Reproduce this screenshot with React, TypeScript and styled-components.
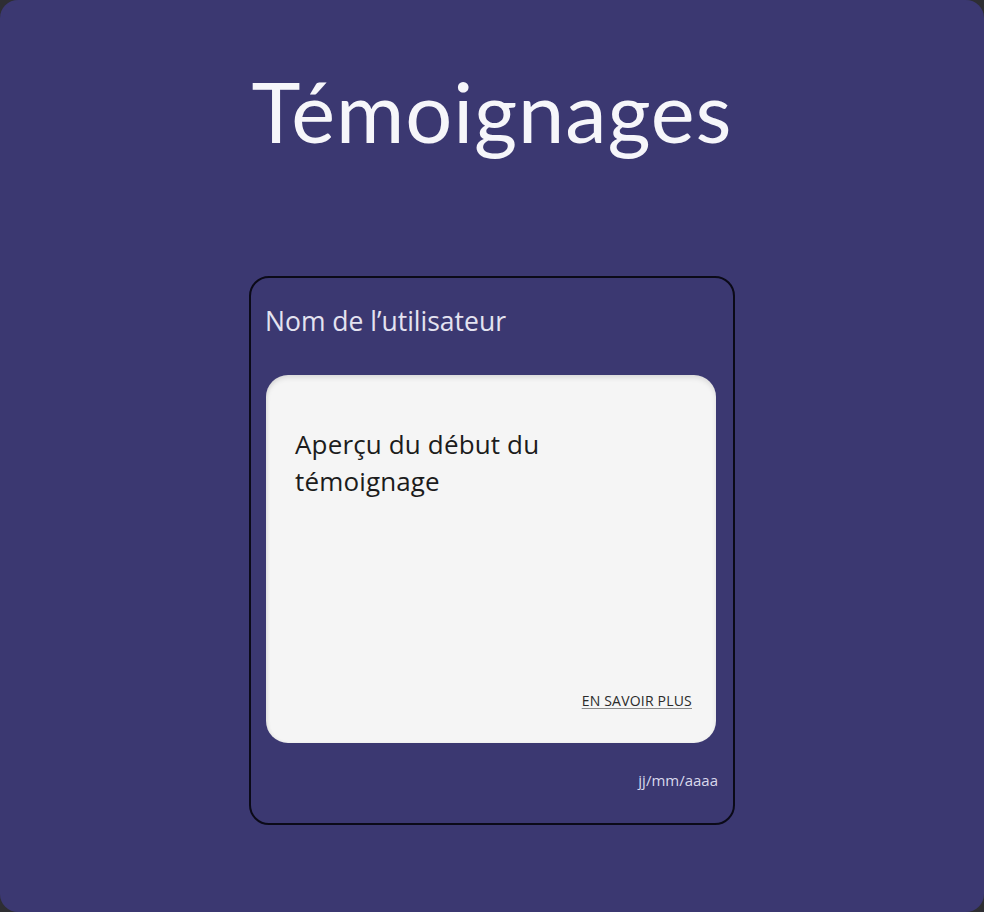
import React from "react";
import styled, { createGlobalStyle } from "styled-components";

const GlobalStyle = createGlobalStyle`
  html, body {
    margin: 0;
    padding: 0;
    background: #2e2e33;
  }
  body {
    font-family: "Open Sans", Lato, "Noto Sans", sans-serif;
  }
`;

const Page = styled.main`
  width: 984px;
  height: 912px;
  box-sizing: border-box;
  background: #3b3871;
  border-radius: 18px;
  display: flex;
  flex-direction: column;
  align-items: center;
  padding-top: 61px;
`;

const Title = styled.h1`
  margin: 0;
  font-family: Lato, "Open Sans", sans-serif;
  font-size: 83px;
  font-weight: 400;
  line-height: 100px;
  color: #f6f6fa;
  letter-spacing: 0.9px;
`;

const Testimonial = styled.article`
  margin-top: 115px;
  width: 486px;
  height: 549px;
  box-sizing: border-box;
  border: 2px solid #0b0a18;
  border-radius: 20px;
  padding: 24px 16px 0 15px;
  display: flex;
  flex-direction: column;
`;

const UserName = styled.div`
  font-size: 26.5px;
  line-height: 38px;
  color: #e4e3f0;
  margin-left: -1px;
`;

const Preview = styled.div`
  margin-top: 35px;
  height: 368px;
  width: 450px;
  box-sizing: border-box;
  background: #f5f5f5;
  border-radius: 22px;
  box-shadow: inset 0 3px 5px rgba(0, 0, 0, 0.1), inset 2px 0 3px rgba(0, 0, 0, 0.04);
  padding: 51px 24px 33px 29px;
  display: flex;
  flex-direction: column;
`;

const Excerpt = styled.p`
  margin: 0;
  max-width: 270px;
  font-size: 26px;
  line-height: 37px;
  color: #1c1c1c;
  letter-spacing: 0.15px;
`;

const MoreLink = styled.a`
  margin-top: auto;
  align-self: flex-end;
  font-size: 14px;
  color: #2b2b2b;
  letter-spacing: 0.2px;
  text-decoration: underline;
  text-underline-offset: 2px;
  text-decoration-color: #8a8a8a;
  cursor: pointer;
`;

const DateLabel = styled.div`
  margin-top: 27px;
  align-self: flex-end;
  font-size: 15px;
  color: #d9d8ec;
  margin-right: -1px;
`;

export default function App() {
  return (
    <>
      <GlobalStyle />
      <Page>
        <Title>Témoignages</Title>
        <Testimonial>
          <UserName>Nom de l’utilisateur</UserName>
          <Preview>
            <Excerpt>Aperçu du début du témoignage</Excerpt>
            <MoreLink>EN SAVOIR PLUS</MoreLink>
          </Preview>
          <DateLabel>jj/mm/aaaa</DateLabel>
        </Testimonial>
      </Page>
    </>
  );
}
